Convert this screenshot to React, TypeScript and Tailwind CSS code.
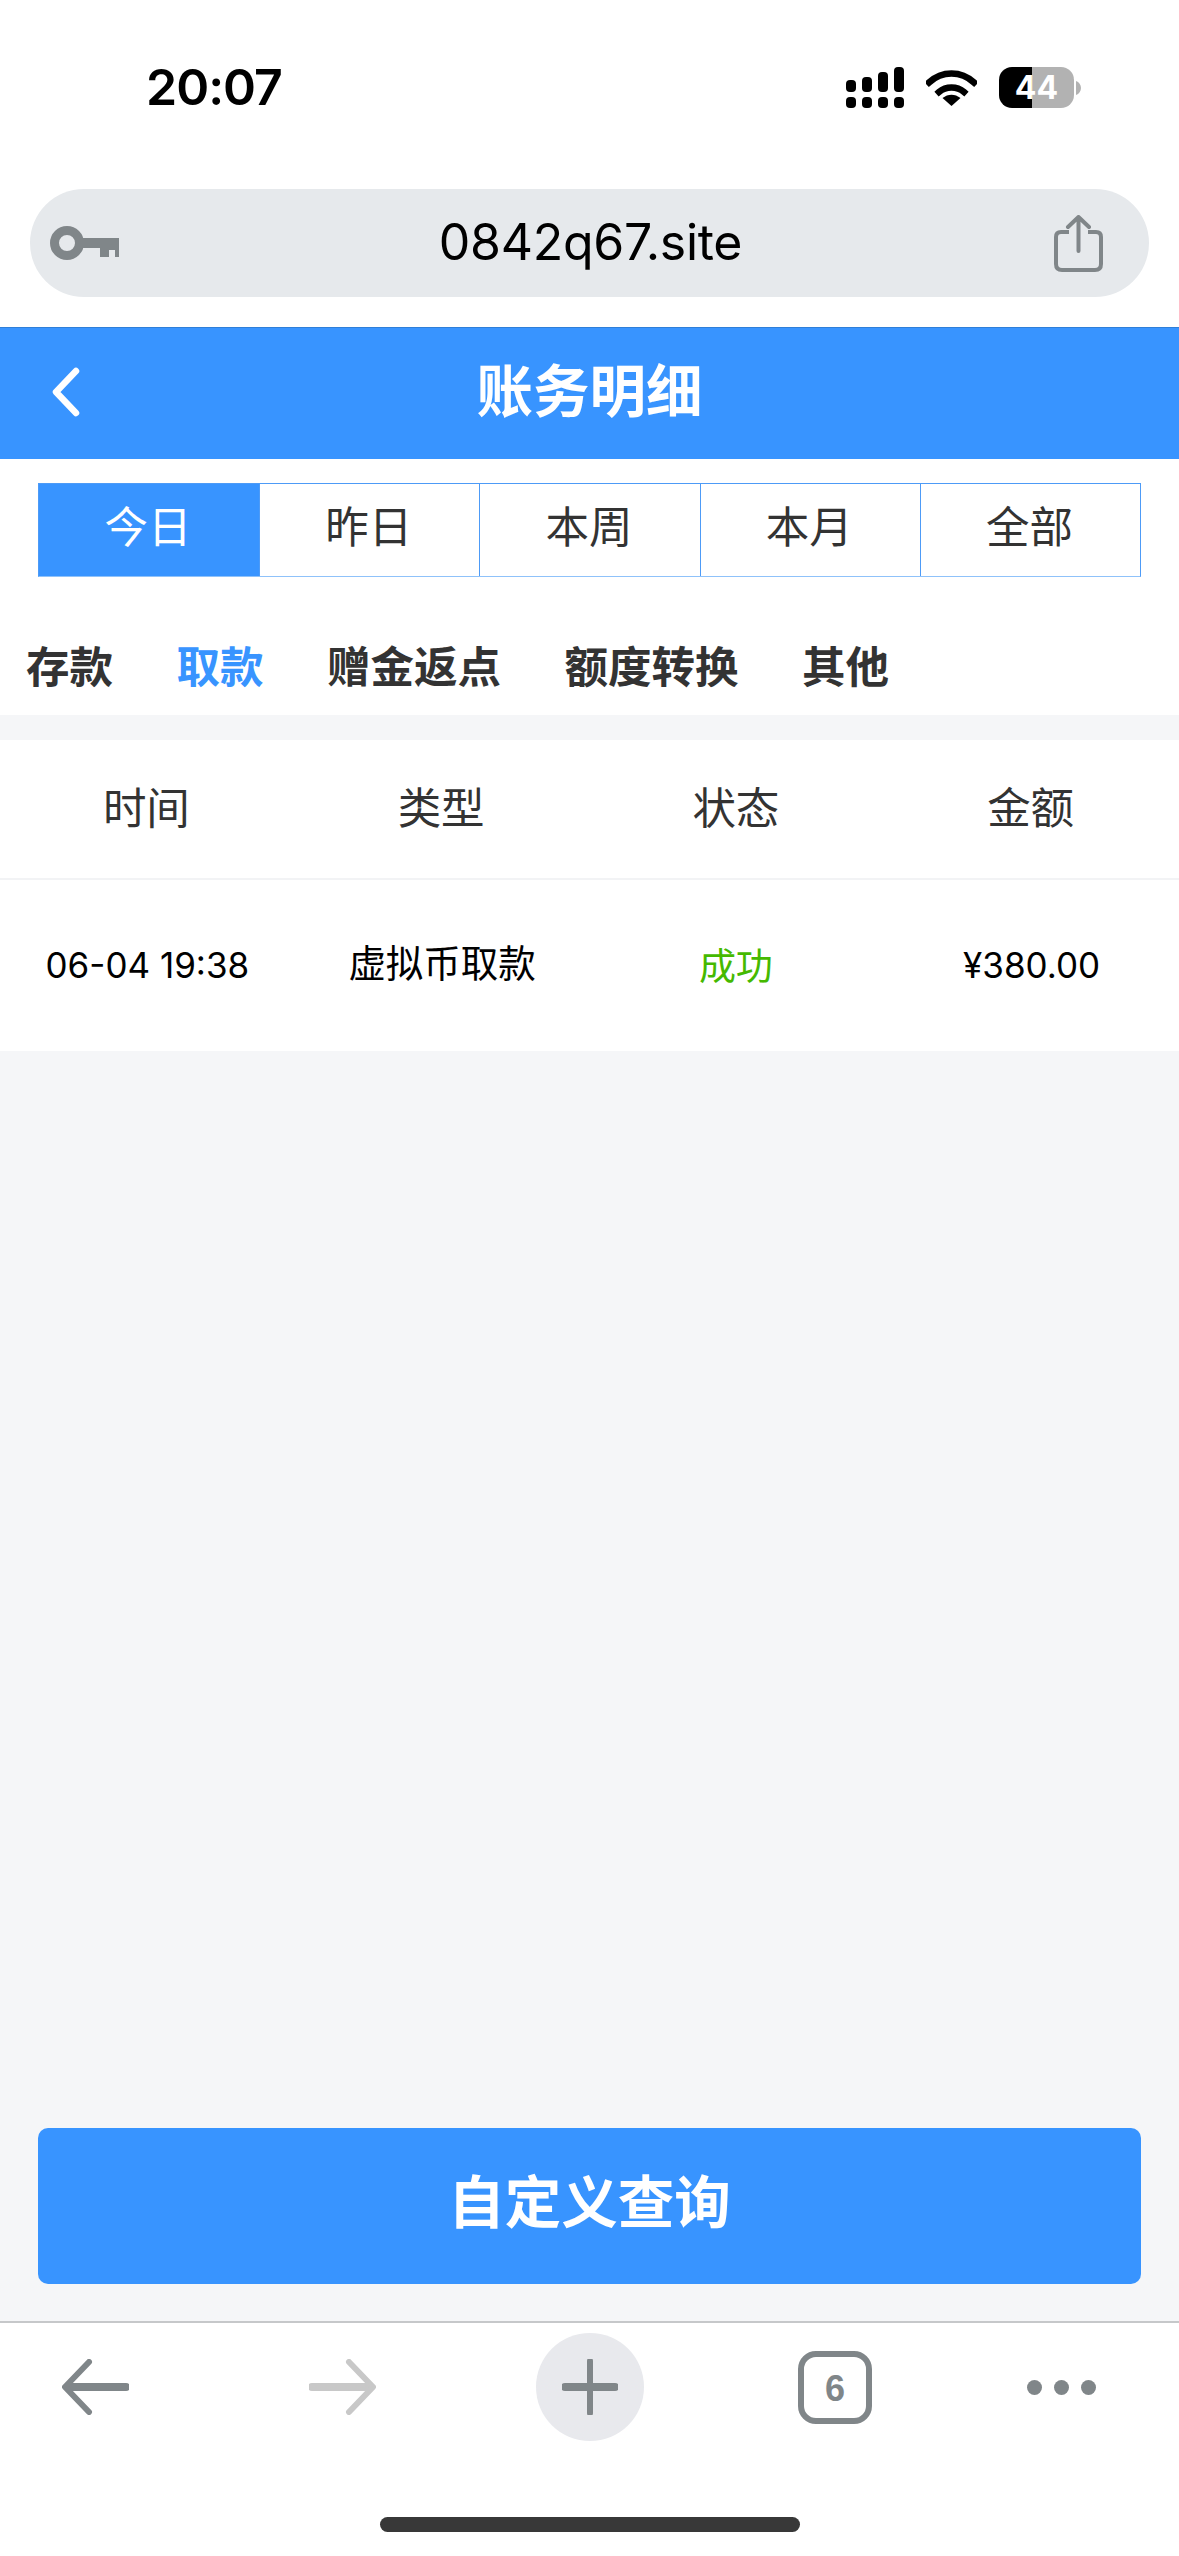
import React from "react";

const cjk = "font-['Inter','Noto_Sans_CJK_SC',sans-serif]";

const ranges = ["今日", "昨日", "本周", "本月", "全部"];
const tabs = ["存款", "取款", "赠金返点", "额度转换", "其他"];
const columns = ["时间", "类型", "状态", "金额"];

const StatusIcons = () => (
  <div className="flex items-center">
    <svg width="58" height="41" viewBox="0 0 58 41" fill="#000">
      <rect x="0" y="13" width="10" height="12" rx="4" />
      <rect x="16" y="10" width="10" height="15" rx="4" />
      <rect x="32" y="5" width="10" height="20" rx="4" />
      <rect x="48" y="0" width="10" height="25" rx="4" />
      <rect x="0" y="30" width="10" height="11" rx="4" />
      <rect x="16" y="30" width="10" height="11" rx="4" />
      <rect x="32" y="30" width="10" height="11" rx="4" />
      <rect x="48" y="30" width="10" height="11" rx="4" />
    </svg>
    <svg className="ml-[22px]" width="51" height="37" viewBox="0 0 51 37" fill="none">
      <path d="M3 13.5C16 1.5 35 1.5 48 13.5" stroke="#000" strokeWidth="6.5" strokeLinecap="square" />
      <path d="M13 23C20 17 31 17 38 23" stroke="#000" strokeWidth="6.5" strokeLinecap="square" />
      <path d="M16.5 29C22 24.5 29 24.5 34.5 29L25.5 37Z" fill="#000" />
    </svg>
    <div className="ml-[22px] flex h-[41px] w-[75px] items-center justify-center rounded-[13px] bg-[linear-gradient(90deg,#000_0,#000_33px,#b2b2b2_33px,#b2b2b2_100%)] text-[32px] font-bold leading-none text-white">
      44
    </div>
    <svg className="ml-[2px]" width="5" height="14" viewBox="0 0 5 14" fill="#b2b2b2">
      <path d="M0 0C3 1 5 4 5 7C5 10 3 13 0 14Z" />
    </svg>
  </div>
);

const KeyIcon = () => (
  <svg width="69" height="34" viewBox="0 0 69 34">
    <circle cx="17" cy="17" r="12.5" fill="none" stroke="#808689" strokeWidth="9" />
    <path d="M32 12H69V31H65V24H59V31H50V22H32Z" fill="#808689" />
  </svg>
);

const ShareIcon = () => (
  <svg width="49" height="57" viewBox="0 0 49 57" fill="none" stroke="#808689">
    <path d="M15 17H7Q2 17 2 22V49Q2 55 8 55H41Q47 55 47 49V22Q47 17 42 17H34" strokeWidth="4" />
    <path d="M24.5 36V3M14 12L24.5 2L35 12" strokeWidth="4" strokeLinecap="round" strokeLinejoin="round" />
  </svg>
);

const Arrow = ({ color, flip }: { color: string; flip?: boolean }) => (
  <svg className={flip ? "-scale-x-100" : ""} width="67" height="56" viewBox="0 0 67 56" fill="none" stroke={color} strokeLinecap="round" strokeLinejoin="round">
    <path d="M64 28H6" strokeWidth="8" />
    <path d="M27 3L3 28L27 53" strokeWidth="6" />
  </svg>
);

export default function App() {
  return (
    <div className={`flex h-[2556px] w-[1179px] flex-col bg-[#f5f6f8] ${cjk}`}>
      <div className="bg-white">
        <div className="flex h-[189px] items-start justify-between pl-[146px] pr-[98px] pt-[67px]">
          <span className="text-[50px] font-semibold leading-[41px] tracking-[-1px] text-black">20:07</span>
          <StatusIcons />
        </div>
        <div className="mx-[30px] flex h-[108px] items-center justify-between rounded-[54px] bg-[#e6e9ec] pl-[20px] pr-[46px]">
          <KeyIcon />
          <span className="ml-[8px] pb-[3px] text-[50px] leading-none tracking-[-0.3px] text-black">0842q67.site</span>
          <ShareIcon />
        </div>
        <div className="h-[30px]" />
      </div>

      <div className="relative flex h-[132px] items-center justify-center border-t border-[#2f7fd8] bg-[#3894ff]">
        <svg className="absolute left-[50px] top-[39px]" width="32" height="50" viewBox="0 0 32 50" fill="none" stroke="#fff" strokeWidth="6.5" strokeLinecap="round" strokeLinejoin="round">
          <path d="M26 4L6 25L26 46" />
        </svg>
        <h1 className="pb-[3px] text-[56.5px] font-bold leading-none text-white">账务明细</h1>
      </div>

      <div className="bg-white">
        <div className="mx-[38px] mt-[24px] grid h-[94px] grid-cols-5 border border-[#4d9bf7] border-b-[#8fc2fa]">
          {ranges.map((r, i) => (
            <div
              key={r}
              className={
                i === 0
                  ? "flex items-center justify-center bg-[#3894ff] pb-[4px] pr-[2px] text-[43.5px] text-white"
                  : "flex items-center justify-center border-l border-[#4d9bf7] pb-[4px] pr-[2px] text-[43.5px] text-[#333]"
              }
            >
              {r}
            </div>
          ))}
        </div>
        <div className="flex h-[138px] items-center gap-[63.5px] pl-[26px] pt-[44px]">
          {tabs.map((t) => (
            <span key={t} className={t === "取款" ? "text-[43.5px] font-bold leading-none text-[#3894ff]" : "text-[43.5px] font-bold leading-none text-[#333]"}>
              {t}
            </span>
          ))}
        </div>
      </div>

      <div className="mt-[25px] bg-white">
        <div className="grid h-[140px] grid-cols-4 border-b-2 border-[#f2f3f5]">
          {columns.map((c) => (
            <div key={c} className="flex items-center justify-center pr-[2px] text-[43.5px] text-[#333]">
              {c}
            </div>
          ))}
        </div>
        <div className="grid h-[171px] grid-cols-4 text-[35px] text-black">
          <div className="flex items-center justify-center whitespace-nowrap">06-04 19:38</div>
          <div className="flex items-center justify-center whitespace-nowrap pb-[2px] text-[37.5px]">虚拟币取款</div>
          <div className="flex items-center justify-center pr-[2px] pt-[3px] text-[37px] text-[#45b900]">成功</div>
          <div className="flex items-center justify-center">¥380.00</div>
        </div>
      </div>

      <button className="mx-[38px] mb-[37px] mt-auto flex h-[156px] items-center justify-center rounded-[10px] bg-[#3894ff] pb-[5px] text-[56.5px] font-bold text-white">
        自定义查询
      </button>

      <div className="h-[235px] border-t-2 border-[#c6c8ca] bg-white">
        <div className="flex h-[118px] items-center pl-[62px] pt-[10px]">
          <Arrow color="#808689" />
          <div className="ml-[180px]">
            <Arrow color="#c8c8c8" flip />
          </div>
          <div className="ml-[160px] flex h-[108px] w-[108px] items-center justify-center rounded-full bg-[#e8e9ed]">
            <svg width="56" height="56" viewBox="0 0 56 56" fill="none" stroke="#808689" strokeLinecap="round">
              <path d="M28 2V54" strokeWidth="6" />
              <path d="M3 28H53" strokeWidth="8" />
            </svg>
          </div>
          <div className="ml-[154px] flex h-[73px] w-[74px] items-center justify-center rounded-[18px] border-[6px] border-[#808689] pt-[3px] font-['Liberation_Sans',sans-serif] text-[36px] font-bold leading-none text-[#808689]">
            6
          </div>
          <div className="ml-[155px] flex gap-[12px]">
            <span className="h-[15px] w-[15px] rounded-full bg-[#808689]" />
            <span className="h-[15px] w-[15px] rounded-full bg-[#808689]" />
            <span className="h-[15px] w-[15px] rounded-full bg-[#808689]" />
          </div>
        </div>
        <div className="mx-auto mt-[76px] h-[15px] w-[420px] rounded-full bg-[#383838]" />
      </div>
    </div>
  );
}
